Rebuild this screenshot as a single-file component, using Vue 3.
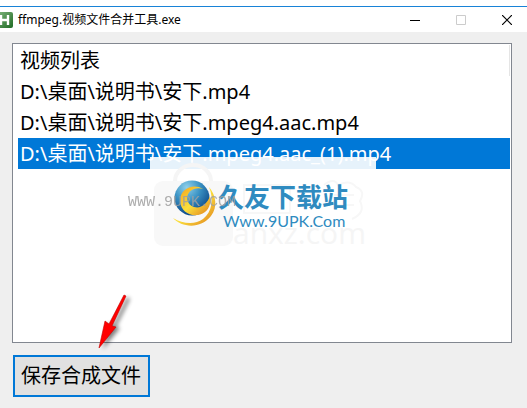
<template>
    <div class="window">
        <header class="titlebar">
            <svg class="app-icon" viewBox="0 0 13 16" aria-hidden="true">
                <defs>
                    <linearGradient id="iconGreen" x1="0" y1="0" x2="1" y2="1">
                        <stop offset="0" stop-color="#7fb47c" />
                        <stop offset="1" stop-color="#1f6b24" />
                    </linearGradient>
                </defs>
                <rect x="-3" y="0" width="16" height="16" rx="2" fill="url(#iconGreen)" />
                <path d="M1 3v10M8 3v10M1 8h7" stroke="#fff" stroke-width="2.4" fill="none" />
            </svg>
            <h1>ffmpeg.视频文件合并工具.exe</h1>
            <div class="controls">
                <button type="button" aria-label="最小化">
                    <svg viewBox="0 0 10 10"><path d="M0 5.5h10" stroke="#000" /></svg>
                </button>
                <button type="button" aria-label="最大化" disabled>
                    <svg viewBox="0 0 10 10"><path d="M.5.5h9v9h-9z" stroke="#ccc" fill="none" /></svg>
                </button>
                <button type="button" aria-label="关闭">
                    <svg viewBox="0 0 10 10"><path d="M0 0l10 10M10 0L0 10" stroke="#000" stroke-width="1.2" /></svg>
                </button>
            </div>
        </header>

        <main class="body">
            <div class="list">
                <table>
                    <thead>
                        <tr>
                            <th scope="col">视频列表</th>
                        </tr>
                    </thead>
                    <tbody>
                        <tr v-for="(file, i) in files" :key="file" :class="{ selected: i === current }" @click="current = i">
                            <td>{{ file }}</td>
                        </tr>
                    </tbody>
                </table>

                <svg class="watermark" viewBox="0 0 250 104">
                    <defs>
                        <radialGradient id="globe" cx="0.35" cy="0.2" r="0.85">
                            <stop offset="0" stop-color="#8fd0ea" />
                            <stop offset="0.45" stop-color="#3a92c4" />
                            <stop offset="1" stop-color="#073f80" />
                        </radialGradient>
                        <linearGradient id="swoosh" x1="0" y1="0" x2="1" y2="1">
                            <stop offset="0" stop-color="#f6a21c" />
                            <stop offset="0.5" stop-color="#fbe03c" />
                            <stop offset="1" stop-color="#e07f1c" />
                        </linearGradient>
                    </defs>
                    <rect x="22" y="0" width="226" height="104" fill="#fff" opacity="0.9" />
                    <path d="M47 24a18 16 0 0 1 36 0" fill="none" stroke="#f5f5f5" stroke-width="4" />
                    <rect x="26" y="24" width="79" height="65" rx="9" fill="#f8f8f8" />
                    <path d="M116 28h46v28h-46zM196 28q10-8 14 0q12-6 18 2q10 4 4 14q6 12-8 18M206 38h20M206 48h20" fill="none" stroke="#f7f7f7" stroke-width="2" />
                    <text x="105" y="87" class="anxz">anxz.com</text>
                    <circle cx="64" cy="41" r="17.500" fill="url(#globe)" />
                    <path d="M81 30C88 38 90 50 83 59C73 72 54 71 45 61C55 67 67 68 75 62C84 55 86 42 81 30z" fill="url(#swoosh)" />
                    <path d="M75 32C66 26 52 31 52 44C53 57 67 62 77 55C82 51 83 45 82 39C79 47 73 52 66 50C57 47 57 35 66 32C69 31 72 31 75 32z" fill="url(#swoosh)" />
                    <text x="90" y="50" class="brand">久友下载站</text>
                    <text x="95" y="70" class="brand-url">Www.9UPK.Com</text>
                    <text x="0" y="49" class="stamp">WWW.9UPK.COM</text>
                </svg>
            </div>

            <button type="button" class="save">保存合成文件</button>

            <svg class="arrow" viewBox="0 0 40 64" aria-hidden="true">
                <path d="M31 5L34 7L20 35L24 36L7 57L13 31L17 33z" class="arrow-shadow" />
                <path d="M28 3L30 4L16 34L20 35L3 56L9 29L13 32z" fill="#f00" stroke="#c40000" stroke-width="0.6" stroke-linejoin="round" />
            </svg>
        </main>
    </div>
</template>

<script setup>
import { ref } from 'vue';

const files = [
    'D:\\桌面\\说明书\\安下.mp4',
    'D:\\桌面\\说明书\\安下.mpeg4.aac.mp4',
    'D:\\桌面\\说明书\\安下.mpeg4.aac_(1).mp4',
];
const current = ref(2);
</script>

<style>
body {
    background-color: #efefef;
}
</style>

<style scoped>
.window {
    min-height: 100vh;
    box-sizing: border-box;
    display: flex;
    flex-direction: column;
    border-top: 6px solid #fff;
    background-color: #efefef;
    color: #000;
    font-family: 'Noto Sans', 'Noto Sans CJK SC', sans-serif;
}

.titlebar {
    display: flex;
    align-items: center;
    height: 26px;
    box-sizing: border-box;
    border-top: 1px solid #1883d7;
    background-color: #fff;
    overflow: hidden;
}

.app-icon {
    width: 13px;
    height: 16px;
}

h1 {
    flex: 1;
    margin: 0;
    padding-left: 5px;
    font-size: 12px;
    line-height: 24px;
    font-weight: normal;
    white-space: nowrap;
}

.controls {
    display: flex;
    margin-right: -3px;
}

.controls button {
    display: flex;
    align-items: center;
    justify-content: center;
    width: 46px;
    height: 24px;
    padding: 0;
    border: none;
    background: none;
}

.controls svg {
    width: 10px;
    height: 10px;
}

.body {
    position: relative;
    flex: 1;
    display: flex;
    flex-direction: column;
    align-items: flex-start;
    gap: 12px;
    padding: 11px 15px 11px 12px;
}

.list {
    position: relative;
    flex: 1;
    align-self: stretch;
    padding: 1px 1px 1px 5px;
    border: 1px solid #828790;
    background-color: #fff;
}

table {
    width: 100%;
    border-collapse: collapse;
}

th,
td {
    height: 31px;
    padding: 0 2px;
    font-size: 20px;
    line-height: 31px;
    font-weight: normal;
    text-align: left;
    white-space: nowrap;
}

th {
    border-right: 1px solid #e5e5e5;
}

.selected {
    background-color: #0078d7;
    color: #fff;
}

.watermark {
    position: absolute;
    left: 115px;
    top: 113px;
    width: 250px;
    height: 104px;
    pointer-events: none;
}

.anxz {
    font-family: 'Open Sans', sans-serif;
    font-size: 30px;
    fill: #f5f5f5;
}

.brand {
    font-family: 'Noto Sans CJK SC', sans-serif;
    font-size: 26px;
    font-weight: bold;
    fill: #2f8bc0;
}

.brand-url {
    font-family: Lato, sans-serif;
    font-size: 16px;
    fill: #2f8bc0;
}

.stamp {
    font-family: 'Liberation Mono', monospace;
    font-size: 15px;
    fill: #a0a0a0;
    opacity: 0.85;
}

.save {
    height: 42px;
    padding: 0 7px 0 6px;
    border: 2px solid #0078d7;
    margin-left: 1px;
    background-color: #e1e1e1;
    color: #000;
    font-family: inherit;
    font-size: 20px;
    line-height: 36px;
    white-space: nowrap;
}

.arrow {
    position: absolute;
    left: 96px;
    bottom: 52px;
    width: 40px;
    height: 64px;
    pointer-events: none;
}

.arrow-shadow {
    fill: #000;
    opacity: 0.5;
    filter: blur(2px);
}
</style>
